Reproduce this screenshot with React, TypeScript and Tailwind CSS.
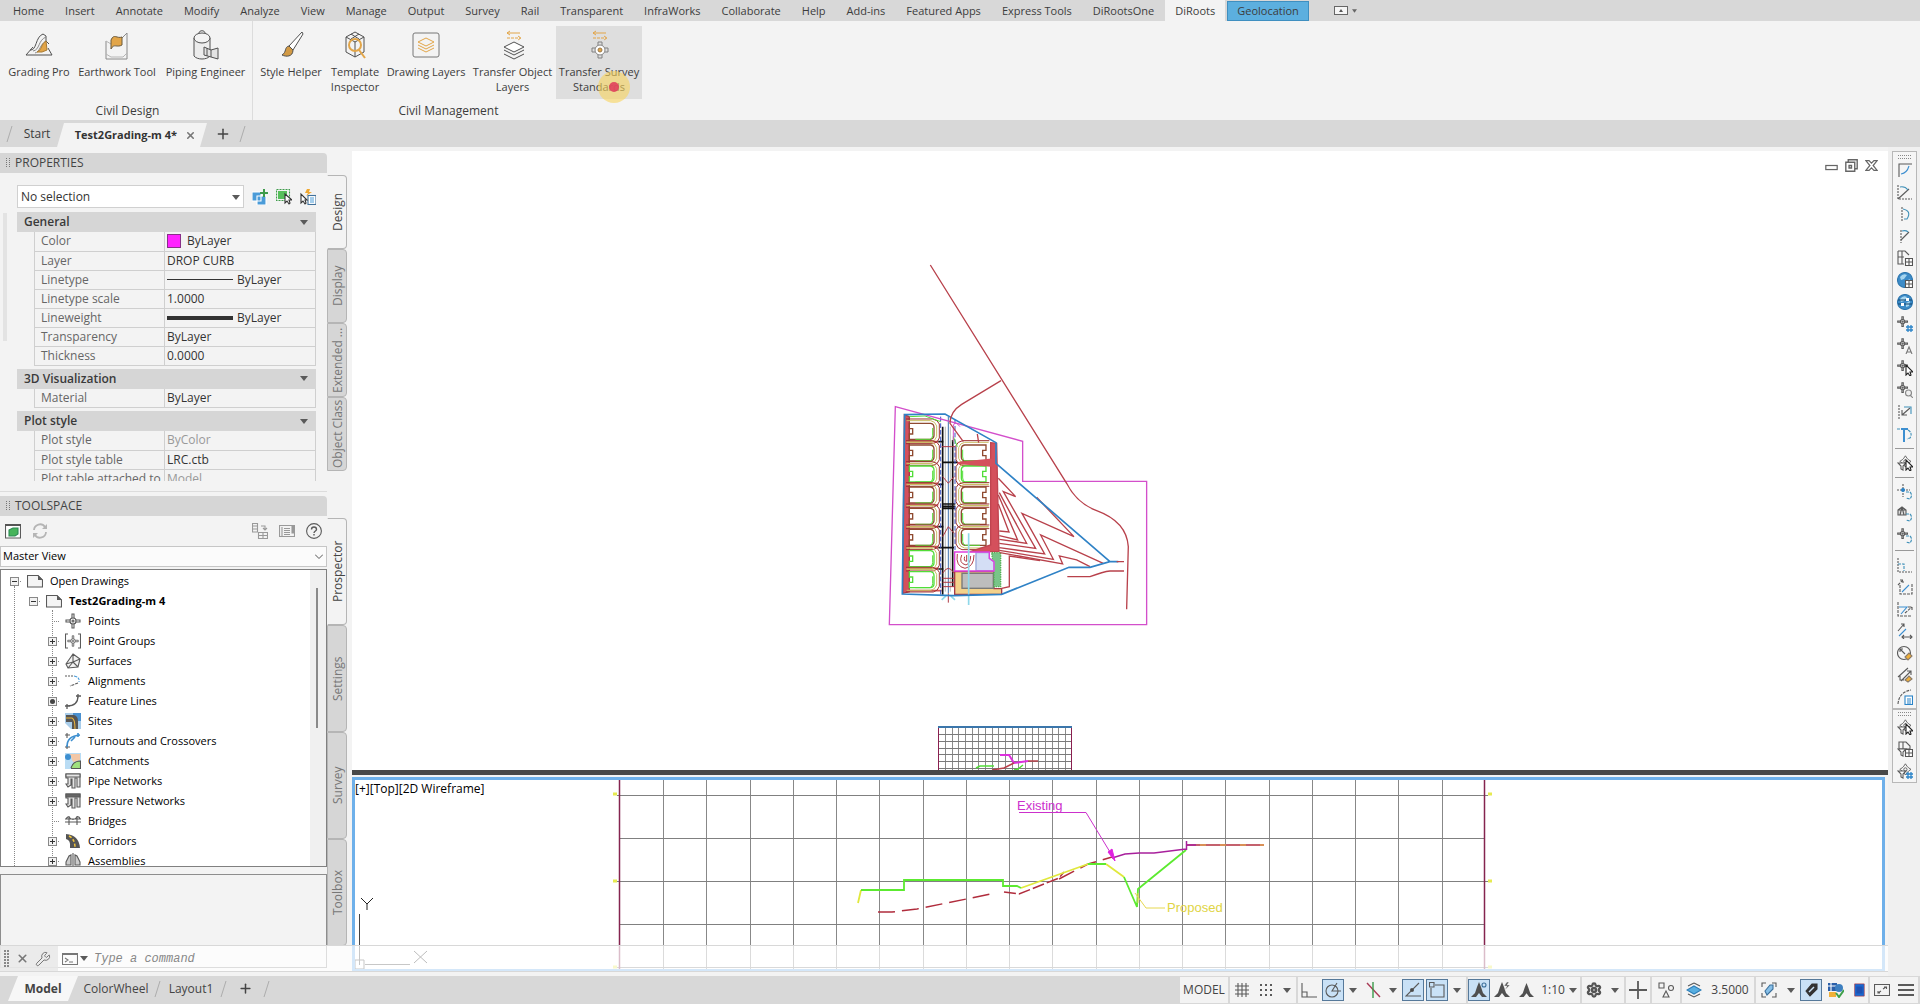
import React from "react";
import { Wrench, Settings, Plus, X } from "lucide-react";

type Kids = { children: React.ReactNode };

const Ico = ({ children, s = 16 }: Kids & { s?: number }) => (
  <svg viewBox="0 0 16 16" width={s} height={s} fill="none" stroke="#5a5a5a" strokeWidth="1.1" aria-hidden="true" className="shrink-0">
    {children}
  </svg>
);

const Caret = () => (
  <svg viewBox="0 0 8 5" width="8" height="5" aria-hidden="true" className="shrink-0">
    <path d="M0 0H8L4 5Z" fill="#5a5a5a" />
  </svg>
);

/* ---------- Menu bar ---------- */

const menus = [
  "Home", "Insert", "Annotate", "Modify", "Analyze", "View", "Manage", "Output", "Survey", "Rail",
  "Transparent", "InfraWorks", "Collaborate", "Help", "Add-ins", "Featured Apps", "Express Tools", "DiRootsOne",
];

const MenuBar = () => (
  <nav className="flex h-[21px] shrink-0 items-stretch gap-px bg-[#d8d8d8] pl-[3px] text-[11px] whitespace-nowrap">
    {menus.map((m) => (
      <button key={m} className="px-[10px] pt-0.5">{m}</button>
    ))}
    <button className="mr-px bg-[#f3f3f3] px-[10px] pt-0.5">DiRoots</button>
    <button className="mt-px border border-[#3f8fc0] bg-[#5cafdf] px-[9px]">Geolocation</button>
    <button aria-label="Minimize ribbon" className="ml-6 flex items-center gap-1">
      <svg viewBox="0 0 14 9" width="14" height="9"><rect x=".5" y=".5" width="13" height="8" fill="#f5f5f5" stroke="#666" /><path d="M5 6h4L7 3Z" fill="#555" /></svg>
      <svg viewBox="0 0 6 4" width="5" height="4"><path d="M0 0H6L3 4Z" fill="#666" /></svg>
    </button>
  </nav>
);

/* ---------- Ribbon ---------- */

const R = ({ children }: Kids) => (
  <svg viewBox="0 0 32 32" width="32" height="32" fill="none" stroke="#505050" strokeWidth="1" strokeLinejoin="round" aria-hidden="true">
    {children}
  </svg>
);

const arrows = (
  <g stroke="#e2a548">
    <path d="M10 3H23M13 1L10 3L13 5" />
    <path d="M10 8H24M21 6L24 8L21 10" strokeDasharray="3 1" />
  </g>
);

const icons = {
  grading: (
    <R>
      <path d="M3 25H29L25 18M3 25L10 17" />
      <path d="M7 20C14 21 12 7 20 4L23 6V11L26 14" />
      <path d="M10 21C17 20 15 10 23 7M12 23C17 22 17 14 23 11" stroke="#888" />
      <path d="M14 22C19 20 18 14 23 11L24 20L19 22Z" fill="#e2a548" stroke="#a97a30" />
    </R>
  ),
  earth: (
    <R>
      <path d="M5 11V29H26V3L21 8" stroke="#8a8a8a" />
      <path d="M5 11L10 14M5 24L10 27H22L26 23" stroke="#b5b5b5" />
      <path d="M10 19V10C13 3 16 9 21 7V15C16 18 13 13 10 19Z" fill="#e2a548" stroke="#6b5a3c" />
    </R>
  ),
  pipe: (
    <R>
      <path d="M4 8V26C7 30 17 30 20 26V8Z" fill="#ececec" />
      <ellipse cx="12" cy="8" rx="8" ry="5" fill="#f3f3f3" /><path d="M9 3C9 0 15 0 15 3" />
      <path d="M14 17L21 20L28 18V29L21 27L14 25ZM21 20V27M17 18V26" fill="#e3e3e3" />
    </R>
  ),
  brush: (
    <R>
      <path d="M27 2L14 16L18 20L28 4Z" fill="#fff" />
      <path d="M14 16C9 17 12 22 7 25C11 27 18 27 18 20Z" fill="#d29a45" />
    </R>
  ),
  template: (
    <R>
      <path d="M16 2L25 7V22L16 27L7 22V7ZM7 7L16 12L25 7M16 12V27M12 4L20 9M20 4L12 9" />
      <circle cx="16" cy="15" r="6" stroke="#e2a548" strokeWidth="2" /><path d="M20 20L26 28" stroke="#e2a548" strokeWidth="2" />
    </R>
  ),
  layers: (
    <R>
      <rect x="3" y="3" width="26" height="24" rx="2" stroke="#777" />
      <path d="M16 8L24 12L16 16L8 12ZM8 15L16 19L24 15M8 18L16 22L24 18" stroke="#e2a548" />
    </R>
  ),
  transfer: (
    <R>{arrows}<path d="M17 12L27 17L17 22L7 17Z" fill="#fff" /><path d="M7 20L17 25L27 20M7 24L17 29L27 24" /></R>
  ),
  survey: (
    <R>
      {arrows}
      <g stroke="#808080"><circle cx="17" cy="20" r="5" fill="#fff" /><path d="M15 15V12H19V15M15 25V28H19V25M12 18H9V22H12M22 18H25V22H22" /></g>
      <circle cx="17" cy="20" r="2" fill="#e2a548" stroke="#9a7a4a" />
    </R>
  ),
};

const Tool = ({ w, icon, label, active }: { w: string; icon: React.ReactNode; label: string; active?: boolean }) => (
  <button className={`${w} ${active ? "bg-[#dedede]" : ""} flex h-[73px] flex-col items-center pt-1`}>
    {icon}
    <span className="mt-0.5 text-center text-[11px] leading-[15px] whitespace-pre">{label}</span>
  </button>
);

const Ribbon = () => (
  <section aria-label="Ribbon" className="flex h-[99px] shrink-0 bg-[#f3f3f3]">
    <div className="flex flex-col items-center justify-between border-r border-[#dcdcdc] pt-[5px] pb-[2px] pl-[3px]">
      <div className="flex">
        <Tool w="w-[72px]" icon={icons.grading} label="Grading Pro" />
        <Tool w="w-[84px]" icon={icons.earth} label="Earthwork Tool" />
        <Tool w="w-[93px]" icon={icons.pipe} label="Piping Engineer" />
      </div>
      <span className="leading-[15px]">Civil Design</span>
    </div>
    <div className="flex flex-col items-center justify-between pt-[5px] pb-[2px] pl-[2px]">
      <div className="relative flex">
        <Tool w="w-[72px]" icon={icons.brush} label="Style Helper" />
        <Tool w="w-[56px]" icon={icons.template} label={"Template\nInspector"} />
        <Tool w="w-[86px]" icon={icons.layers} label="Drawing Layers" />
        <Tool w="w-[87px]" icon={icons.transfer} label={"Transfer Object\nLayers"} />
        <Tool w="w-[86px]" icon={icons.survey} label={"Transfer Survey\nStandards"} active />
        <span className="absolute right-3 -bottom-1 flex size-8 items-center justify-center rounded-full bg-[#f8d45c]/60">
          <span className="size-2.5 rounded-full bg-[#e0405c]/90" />
        </span>
      </div>
      <span className="leading-[15px]">Civil Management</span>
    </div>
  </section>
);

const Slash = () => (
  <svg viewBox="0 0 8 18" width="8" height="18" aria-hidden="true" className="shrink-0"><path d="M1 17L6 1" stroke="#adadad" fill="none" /></svg>
);

const DocTabs = () => (
  <div className="flex h-[27px] shrink-0 items-center bg-[#d8d8d8] pl-1.5">
    <Slash />
    <button className="w-[43px] shrink-0 pr-px pl-1 text-center">Start</button>
    <div className="mt-[3px] flex h-6 w-[150px] shrink-0 items-center justify-end gap-2 bg-[#f3f3f3] pr-[11px] [clip-path:polygon(7px_0,100%_0,calc(100%-7px)_100%,0_100%)]">
      <button className="text-[11px] font-bold whitespace-nowrap text-[#333]">Test2Grading-m 4*</button>
      <button aria-label="Close drawing"><X size={11} strokeWidth={3.5} color="#777" /></button>
    </div>
    <button aria-label="New drawing" className="ml-2"><Plus size={16} strokeWidth={2.2} color="#444" /></button>
    <span className="ml-2"><Slash /></span>
  </div>
);

/* ---------- Side panels ---------- */

const PanelTitle = ({ children }: Kids) => (
  <h2 className="flex h-5 shrink-0 items-center gap-[5px] rounded-tr bg-[#d6d6d6] pl-1.5 text-[#444]">
    <svg viewBox="0 0 4 10" width="4" height="10" fill="#777" aria-hidden="true">
      {[0, 2, 4, 6, 8].map((y) => <path key={y} d={`M0 ${y}h1v1h-1zM3 ${y}h1v1h-1z`} />)}
    </svg>
    {children}
  </h2>
);

const SideTabs = ({ names, h }: { names: string[]; h: string }) => (
  <div role="tablist" className="flex w-5 shrink-0 flex-col">
    {names.map((n, i) => (
      <button
        key={n}
        role="tab"
        aria-selected={i === 0}
        className={`${h} ${i === 0 ? "border-r-[#f3f3f3] bg-[#f3f3f3] text-[#444]" : "bg-[#d6d6d6] text-[#777]"} flex w-5 rotate-180 items-center justify-center rounded-l border border-[#b5b5b5] pr-0.5 [writing-mode:vertical-rl]`}
      >
        {n}
      </button>
    ))}
  </div>
);

const Head = ({ children }: Kids) => (
  <button className="flex h-5 w-full items-center justify-between bg-[#d6d6d6] pr-2 pl-[7px] font-semibold text-[#3a3a3a]">
    {children}
    <Caret />
  </button>
);

const PropTable = ({ rows }: { rows: [string, React.ReactNode, string?][] }) => (
  <table className="mb-[3px] ml-[17px] w-[282px] table-fixed border-collapse">
    <tbody>
      {rows.map(([k, v, c]) => (
        <tr key={k} className="h-[19px] border-b border-[#cfcfcf]">
          <th scope="row" className="h-[19px] w-[130px] overflow-hidden border-x border-[#cfcfcf] py-0 pl-1.5 text-left leading-[18px] font-normal whitespace-nowrap text-[#666]">{k}</th>
          <td className={`h-[19px] border-r border-[#cfcfcf] py-0 pl-[2px] leading-[18px] ${c ?? "text-[#333]"}`}>{v}</td>
        </tr>
      ))}
    </tbody>
  </table>
);

const Properties = () => (
  <div className="flex">
    <section aria-label="Properties" className="flex h-[339px] min-w-0 flex-1 flex-col border-b border-[#dcdcdc]">
      <PanelTitle>PROPERTIES</PanelTitle>
      <div className="flex min-h-0 flex-1">
        <div className="mt-10 ml-[3px] h-32 w-1 bg-[#e3e3e3]" />
        <div className="mr-[11px] mb-2.5 ml-[10px] flex-1 overflow-hidden pt-3">
          <div className="mb-1 flex items-center">
            <label className="relative">
              <select aria-label="Selection" className="h-[23px] w-[227px] appearance-none border border-[#d0d0d0] bg-white pl-[3px] text-[#333]">
                <option>No selection</option>
              </select>
              <span className="pointer-events-none absolute top-[10px] right-1"><Caret /></span>
            </label>
            <span className="ml-2 flex gap-2">
              <button aria-label="Toggle value of PICKADD"><Ico><path d="M0 3h9v9H0zM5 7h9v9H5z" fill="#4a9bd8" stroke="#fff" /><path d="M12 0v8M8 4h8" stroke="#3f9b4b" strokeWidth="2" /></Ico></button>
              <button aria-label="Select objects"><Ico><rect x="2" y="2" width="9" height="8" fill="#57bf5b" stroke="none" /><rect x=".5" y=".5" width="13" height="11" stroke="#3f9b4b" strokeDasharray="2 1" /><path d="M9 5V14L11 12L13 15L14 14L13 11H16Z" fill="#fff" stroke="#333" /></Ico></button>
              <button aria-label="Quick select"><Ico><path d="M7 0L5 4H8L6 7L12 3H9L10 0Z" fill="#f0a830" stroke="none" /><rect x="8" y="6.500" width="8" height="9" fill="#fff" stroke="#41719a" /><path d="M10 9h4M10 11h4M10 13h4" stroke="#4a9bd8" /><path d="M1 5V14L3 12L5 15L6 14L5 11H7Z" fill="#fff" stroke="#333" /></Ico></button>
            </span>
          </div>
          <Head>General</Head>
          <PropTable
            rows={[
              ["Color", <span className="flex items-center gap-1.5"><i className="size-3.5 border border-[#883088] bg-[#ff22ff]" />ByLayer</span>],
              ["Layer", "DROP CURB"],
              ["Linetype", <span className="flex items-center gap-1"><i className="h-px w-[66px] bg-[#333]" />ByLayer</span>],
              ["Linetype scale", "1.0000"],
              ["Lineweight", <span className="flex items-center gap-1"><i className="h-1 w-[66px] bg-[#333]" />ByLayer</span>],
              ["Transparency", "ByLayer"],
              ["Thickness", "0.0000"],
            ]}
          />
          <Head>3D Visualization</Head>
          <PropTable rows={[["Material", "ByLayer"]]} />
          <Head>Plot style</Head>
          <PropTable rows={[["Plot style", "ByColor", "text-[#999]"], ["Plot style table", "LRC.ctb"], ["Plot table attached to", "Model", "text-[#999]"]]} />
        </div>
      </div>
    </section>
    <div className="pt-[22px]">
      <SideTabs h="h-[74px]" names={["Design", "Display", "Extended ...", "Object Class"]} />
    </div>
  </div>
);

const cross = (
  <><path d="M8 1L10 4L12 6L15 8L12 10L10 12L8 15L6 12L4 10L1 8L4 6L6 4Z" /><circle cx="8" cy="8" r="2" /></>
);
const pointMark = (
  <><path d="M7 1H9V5L11 7H15V9H11L9 11V15H7V11L5 9H1V7H5L7 5Z" /><circle cx="8" cy="8" r="3" fill="#fff" /><circle cx="8" cy="8" r="1" /></>
);
const pageIcon = <Ico><path d="M.5 2.500H11L15.500 7V14H.5Z" fill="#f4f4f4" /><path d="M11 2V7H16Z" fill="#5a5a5a" stroke="none" /></Ico>;
const net = (dark: string) => (
  <Ico><path d="M1 1H15V14H12V5H10V15H7V6H6V12L3 14L1 11H3V5H1Z" fill="#e4e4e4" /><path d="M1 1H15V4H1Z" fill={dark} /></Ico>
);

const tree: [string, string, React.ReactNode][] = [
  ["Points", "", <Ico>{pointMark}</Ico>],
  ["Point Groups", "+", <Ico><path d="M3 1H.5V15H3M13 1H15.500V15H13" /><g transform="translate(2 2) scale(.75)">{pointMark}</g></Ico>],
  ["Surfaces", "+", <Ico><path d="M8 1L15 6L13 14L3 15L1 11ZM8 1V9M8 9L15 6M8 9L13 14M8 9L3 15M8 9L1 11" fill="#f2f2f2" /></Ico>],
  ["Alignments", "+", <Ico><path d="M0 3H8" strokeDasharray="2 1" /><path d="M9 3Q15 4 14 9" stroke="#4a9bd8" strokeDasharray="3 1" /><path d="M13 10L5 13" strokeDasharray="3 1" /></Ico>],
  ["Feature Lines", "o", <Ico><path d="M2 13Q13 13 13 3M0 13H5M2 11V16M11 3H16M13 1V5" strokeWidth="1.300" /></Ico>],
  ["Sites", "+", <Ico><path d="M0 0H16V16H6L0 10Z" fill="#a9cdea" stroke="none" /><path d="M8 0H16V8H8Z" fill="#4a90cf" stroke="none" /><path d="M1 2H9Q13 3 13 8V16H7V9H1Z" fill="#555" stroke="none" /><path d="M1 5H7Q10 6 10 16" stroke="#efb73a" /></Ico>],
  ["Turnouts and Crossovers", "+", <Ico><path d="M2 0V5M0 2H5M2 12V16M0 14H5" /><path d="M2 14C2 6 6 3 15 2M6 8L10 4M13 0V4" stroke="#3d8fd0" strokeWidth="1.600" /></Ico>],
  ["Catchments", "+", <Ico><path d="M0 0H16V16H0Z" fill="#b9dcf4" stroke="none" /><path d="M5 1H15V7L8 9Z" fill="#f3c7a6" stroke="none" /><path d="M6 15Q8 8 15.500 8V15.500H6" fill="#9fe07f" stroke="#555" /><circle cx="3" cy="4" r="3" fill="#3d8fd0" stroke="none" /></Ico>],
  ["Pipe Networks", "+", net("#e4e4e4")],
  ["Pressure Networks", "+", net("#666")],
  ["Bridges", "", <Ico><path d="M0 6H16M0 9H16M4 3V12M12 3V12M1 6Q3 3 4 4Q8 9 12 4Q14 3 15 6" /></Ico>],
  ["Corridors", "+", <Ico><path d="M1 1Q14 2 15 15H5Q6 7 1 6Z" fill="#555" stroke="none" /><path d="M4 3Q10 6 10 15" stroke="#efc23a" strokeDasharray="3 2" strokeWidth="1.500" /></Ico>],
  ["Assemblies", "+", <Ico><path d="M1 9L4 3L6 2V12H1ZM15 9L12 3L10 2V12H15ZM8 0V16" fill="#ccc" /></Ico>],
];

const Box = ({ kind }: { kind: string }) => (
  <svg viewBox="0 0 12 9" width="12" height="9" aria-hidden="true" className="shrink-0">
    {kind ? (
      <>
        <rect x=".5" y=".5" width="8" height="8" fill="#f2f2f2" stroke="#888" />
        {kind === "o" ? <circle cx="4.500" cy="4.500" r="2.500" fill="#444" /> : <path d={kind === "+" ? "M2 4.500H7M4.500 2V7" : "M2 4.500H7"} stroke="#333" />}
        <path d="M10 4.500H12" stroke="#888" strokeDasharray="1 1" />
      </>
    ) : (
      <path d="M4 4.500H12" stroke="#888" strokeDasharray="1 1" />
    )}
  </svg>
);

const TreeRow = ({ pad, kind, icon, label, bold }: { pad: string; kind: string; icon: React.ReactNode; label: string; bold?: boolean }) => (
  <li className={`${pad} flex h-5 items-center`}>
    <Box kind={kind} />
    <span className="ml-[5px]">{icon}</span>
    <button className={`ml-[7px] ${bold ? "font-bold" : ""}`}>{label}</button>
  </li>
);

const Toolspace = () => (
  <div className="mt-1 flex min-h-0 flex-1">
    <section aria-label="Toolspace" className="flex min-w-0 flex-1 flex-col">
      <PanelTitle>TOOLSPACE</PanelTitle>
      <div className="flex h-[30px] shrink-0 items-center gap-[11px] px-[5px]">
        <button aria-label="Toggle data"><Ico><path d="M.5 1.500H15.500V15H.5Z" fill="#fff" /><path d="M0 1H16V3H0Z" fill="#555" stroke="none" /><path d="M4 7L8 5H13V11L10 13H4Z" fill="#46b45a" stroke="#2d8a55" /></Ico></button>
        <button aria-label="Refresh"><Ico><path d="M2 7A6 6 0 0 1 13 4M14 9A6 6 0 0 1 3 12" stroke="#b5b5b5" strokeWidth="1.800" /><path d="M15 1V6H10ZM1 15V10H6Z" fill="#b5b5b5" stroke="none" /></Ico></button>
        <span className="flex-1" />
        <button aria-label="Item views"><Ico><g stroke="#999"><path d="M.5.500H5.500V9H.5ZM1 3H5M1 6H5M6.500 9.500H15.500V15.500H6.500ZM7 12.500H15M11 10V15M9 3H13V7M11 5L13 7L15 5" /></g></Ico></button>
        <button aria-label="Preview"><Ico><g stroke="#999"><path d="M.5 2.500H15.500V13.500H.5ZM3 4V13M5 5.500H11M5 7.500H11M5 9.500H11M5 11.500H11" /><path d="M13 3H15V10H13Z" fill="#999" /></g></Ico></button>
        <button aria-label="Help"><Ico><circle cx="8" cy="8" r="7.400" /><path d="M5.500 6.500Q5.500 4 8 4T10.500 6.500C10.500 8 8 8 8 10M8 11V12.500" strokeWidth="1.400" /></Ico></button>
      </div>
      <label className="relative shrink-0">
        <select aria-label="View" className="h-[21px] w-full appearance-none border border-[#c6c6c6] bg-[#fbfbfb] pl-[2px] text-[11px] text-black">
          <option>Master View</option>
        </select>
        <svg viewBox="0 0 8 5" width="8" height="5" className="pointer-events-none absolute top-2 right-1"><path d="M0 .5L4 4.500L8 .5" fill="none" stroke="#555" /></svg>
      </label>
      <div className="mt-[2px] flex h-[298px] shrink-0 overflow-hidden border border-[#808080] bg-white text-[11px] text-black">
        <ul className="relative flex-1 pt-px">
          <li className="absolute top-4 left-[13px] h-[282px] border-l border-dotted border-[#888]" aria-hidden="true" />
          <li className="absolute top-10 left-[51px] h-[260px] border-l border-dotted border-[#888]" aria-hidden="true" />
          <TreeRow pad="relative pl-[9px]" kind="-" icon={pageIcon} label="Open Drawings" />
          <TreeRow pad="relative pl-[28px]" kind="-" icon={pageIcon} label="Test2Grading-m 4" bold />
          {tree.map(([l, k, i]) => <TreeRow key={l} pad="relative pl-[47px]" kind={k} icon={i} label={l} />)}
        </ul>
        <div className="w-4 bg-[#f0f0f0] pt-[18px] pl-[6px]"><div className="h-[140px] w-0.5 bg-[#8a8a8a]" /></div>
      </div>
      <div className="mt-[7px] flex-1 border border-[#8d8d8d]" />
    </section>
    <div className="pt-[22px]">
      <SideTabs h="h-[107px]" names={["Prospector", "Settings", "Survey", "Toolbox"]} />
    </div>
  </div>
);

/* ---------- Drawing area ---------- */

const houseY = [520, 585, 648, 711, 775, 838, 902, 965];
const greenLeft = [2, 6, 7];
const House = ({ x, y, green, flip }: { x: number; y: number; green: boolean; flip?: boolean }) => (
  <g transform={flip ? `translate(${x + 76} ${y}) scale(-1 1)` : `translate(${x} ${y})`}>
    <path d="M-6-8H66Q80-6 84 8V40Q80 54 66 56H-6" stroke="#c9bd62" strokeWidth="3" />
    <path d="M-8-13H72Q88-10 92 2V44Q88 58 74 61H-8" stroke="#9c3030" strokeWidth="3" />
    <path d="M2 0H66Q76 2 76 12V36Q76 46 66 48H2V32H12V16H2Z" fill="#fff" stroke={green ? "#52dd38" : "#8f4a30"} strokeWidth="4" />
    <path d="M20 48H64Q72 46 72 36V14" stroke="#52dd38" strokeWidth="3" />
  </g>
);

const contours = [
  "M385 762L417 846L388 843",
  "M385 735L443 870L388 857",
  "M388 728L470 880L388 868",
  "M385 685L437 740L400 725L497 895L388 880",
  "M500 742L612 860L456 790L524 912L388 893",
  "M700 940L512 855L550 928L388 901",
  "M660 950L620 930L568 918L578 942L390 908",
  "M395 1015L418 1010V918L510 932",
];

const SitePlan = () => (
  <g transform="translate(870 250) scale(.3333)" fill="none" strokeWidth="4">
    <path d="M103 494L118 500V1025L98 1030Z" fill="#d4505c" stroke="#a83a48" />
    <path d="M118 575H205M118 700H205M118 765H205M118 830H205M118 890H205M118 955H205M110 1022H215" stroke="#cf5555" strokeWidth="5" />
    {houseY.map((y, i) => <House key={y} x={116} y={y} green={greenLeft.includes(i)} />)}
    {houseY.slice(1, 6).map((y, i) => <House key={y} x={274} y={y} green={i === 1} flip />)}
    <path d="M362 578L380 580L387 905H300L362 885Z" fill="#d4505c" stroke="#c04450" />
    <path d="M262 636L380 624V652L262 642Z" fill="#d4505c" stroke="none" />
    <path d="M218 530V1034M248 570V1010" stroke="#111" strokeWidth="5" />
    <path d="M235 500V1030" stroke="#3d6fae" strokeWidth="3" />
    <path d="M226 530V1025M241 530V1025" stroke="#999" strokeWidth="2" />
    <path d="M218 762H256M218 769H256M218 775H256M205 575H220M205 830H220M205 893H252M205 957H220M218 637H262M205 703H220" stroke="#111" strokeWidth="5" />
    <path d="M212 500V1034M255 508V900" stroke="#3b52c4" strokeWidth="3" strokeDasharray="14 6" />
    <path d="M218 680L235 700L252 680M218 860L235 830L252 850M215 590H255M218 970Q235 940 252 970M218 985H252M218 997H252M218 1010H252M235 1030V1058" stroke="#b03a44" strokeWidth="3" />
    <path d="M118 500L165 498L212 515M250 575V560L262 590" stroke="#52dd38" strokeWidth="3" />
    <path d="M250 575V530Q252 508 270 530" stroke="#d34fcb" strokeWidth="3" />
    <path d="M254 965H372V1016H395V1033H254Z" fill="#f3d28b" stroke="#a83a48" />
    <rect x="276" y="970" width="94" height="45" fill="#bdbdbd" stroke="#777" />
    <path d="M365 908H392V1010H372V965Z" fill="#79c489" stroke="#52b050" strokeDasharray="4 3" />
    <path d="M318 908H358V925L372 935V962H318Z" fill="#d4def5" stroke="#9aa8d8" />
    <path d="M254 906H358V925L372 935V963H254Z" stroke="#e03fe0" />
    <path d="M262 912Q256 950 285 955Q312 950 312 915M275 915Q265 940 288 945Q302 940 302 918M284 920Q280 934 290 934V915" stroke="#b03a44" strokeWidth="3" />
    <path d="M296 850V1065M215 1050L228 1038M255 1050L242 1038" stroke="#8fd8ea" strokeWidth="5" />
    <g stroke="#b8414b" strokeWidth="4">{contours.map((d) => <path key={d} d={d} />)}</g>
    <path d="M76 470L458 574V694H830V1124H58Z" stroke="#d34fcb" />
    <path d="M104 494L225 492L378 578V640L720 935L660 952H597L395 1033L250 1037L97 1032ZM720 935H745" stroke="#2f82c6" strokeWidth="5" />
    <g stroke="#b8414b">
      <path d="M181 45L590 700Q620 760 680 782Q770 815 775 890L770 1078" />
      <path d="M393 392L275 463Q240 485 240 520L280 575M322 552L326 578M592 980H660Q700 965 720 963H762M740 935H762" />
    </g>
  </g>
);

const range = (n: number) => Array.from({ length: n }, (_, i) => i);

const TopViewport = () => (
  <div className="relative h-[619px] overflow-hidden bg-white">
    <svg className="absolute inset-0 size-full" role="img" aria-label="Site plan">
      <g transform="translate(-352 -151)">
        <SitePlan />
        <g fill="none">
          <path d={range(19).map((i) => `M${945 + Math.round(i * 6.67)}.5 727V770`).join("")} stroke="#8c8c8c" />
          <path d={range(6).map((i) => `M938 ${734 + Math.round(i * 6.8)}.5H1072`).join("")} stroke="#7a7a7a" />
          <path d="M938.5 727V770M1071.500 727V770" stroke="#8a2050" />
          <path d="M938 727H1072" stroke="#3b76ab" strokeWidth="2" />
          <path d="M1000 755H1009L1014 763L1028 761" stroke="#dd30dd" strokeWidth="2" />
          <path d="M976 768L980 766H994M1014 770L1018 769L1023 765" stroke="#52dd38" strokeWidth="1.500" />
          <path d="M992 770L1004 768L1014 763M1028 761H1038" stroke="#b8414b" strokeWidth="1.500" />
        </g>
      </g>
    </svg>
    <div className="absolute top-2 right-2.5 flex gap-[7px]">
      <button aria-label="Minimize viewport"><Ico s={13}><rect x="1" y="8" width="14" height="5" fill="#fff" stroke="#666" strokeWidth="1.500" /></Ico></button>
      <button aria-label="Restore viewport"><Ico s={13}><path d="M4 4V1H15V12H12M1 4H12V15H1ZM5 8H8V11H5Z" stroke="#666" strokeWidth="1.700" /></Ico></button>
      <button aria-label="Close viewport"><Ico s={13}><path d="M1 2H5L8 5L11 2H15L10 8L15 14H11L8 11L5 14H1L6 8Z" stroke="#666" strokeWidth="1.500" /></Ico></button>
    </div>
  </div>
);

const BottomViewport = () => (
  <div className="relative mr-[3px] min-h-0 flex-1 overflow-hidden border-[3px] border-[#6eb0ea] bg-white">
    <span className="absolute top-px left-0 z-10 text-black">[+][Top][2D Wireframe]</span>
    <svg className="absolute -inset-[3px] h-[calc(100%+6px)] w-[calc(100%+6px)]" role="img" aria-label="Section profile">
      <g transform="translate(-352 -777)" fill="none">
        <path d={range(19).map((i) => `M${663 + Math.round(i * 43.25)}.5 774V972`).join("")} stroke="#888" />
        <path d="M617 795.500H1488M620 838.500H1485M617 881.500H1488M620 924.500H1485M617 967.500H1488" stroke="#808080" />
        <path d="M619.500 774V972M1484.500 774V972" stroke="#85244f" strokeWidth="1.500" />
        <path d="M613 794H617M613 881H617M613 967H617M1488 794H1492M1488 881H1492M1488 967H1492" stroke="#e6ea50" strokeWidth="3" />
        <path d="M878 912H892L917 909L996 893M1059 879L1088 864L1112 857" stroke="#b02c3c" strokeWidth="1.500" strokeDasharray="17 7" />
        <path d="M1004 892L1019 894L1059 878L1064 872" stroke="#b02c3c" strokeWidth="1.500" strokeDasharray="12 3" />
        <path d="M858 903L861 890M1021 888L1088 864M1106 864L1124 877" stroke="#e0e83c" strokeWidth="1.800" />
        <path d="M861 890H904V880H1003V886H1017L1021 888M1088 864H1106M1124 877L1137 907L1138 889L1186 850" stroke="#5cea30" strokeWidth="1.800" />
        <path d="M1186 845H1264" stroke="#b02c3c" strokeWidth="1.500" />
        <path d="M1200 845H1264" stroke="#e0a050" strokeWidth="1.500" strokeDasharray="6 14" />
        <path d="M1112 858L1125 854L1139 853H1154L1186 849M1186.500 841V850M1186 845H1196" stroke="#a8209c" strokeWidth="1.500" />
        <path d="M1019 812.500H1086L1113 857" stroke="#cc30cc" />
        <path d="M1108 852L1112 849L1115 861Z" fill="#e020e0" stroke="#e020e0" />
        <path d="M1135 893L1146 908H1165M1138 893V903" stroke="#e6d850" />
        <text x="1017" y="810" fill="#cc30cc" fontSize="13" className="font-[Liberation_Sans]">Existing</text>
        <text x="1167" y="912" fill="#e0d444" fontSize="13" className="font-[Liberation_Sans]">Proposed</text>
        <path d="M359.500 914V965M365 964.500H410M355 960H364V969H355Z" stroke="#444" />
        <path d="M361 898L367 904L373 898M367 904V910M414 951L427 963M427 951L414 963" stroke="#222" />
      </g>
    </svg>
  </div>
);

const CommandLine = () => (
  <form className="absolute right-8 bottom-8 left-0 z-20 flex h-[27px] items-center border-y border-[#d8d8d8] bg-white/70" onSubmit={(e) => e.preventDefault()}>
    <div className="flex h-full w-[58px] items-center gap-1.5 bg-[#e6e6e6]/80 pl-1">
      <svg viewBox="0 0 6 18" width="6" height="18" fill="#888" aria-hidden="true">{range(6).map((i) => <path key={i} d={`M0 ${i * 3}h2v2h-2zM3 ${i * 3}h2v2h-2z`} />)}</svg>
      <button type="button" aria-label="Close command line"><X size={13} strokeWidth={3} color="#777" /></button>
      <button type="button" aria-label="Customize"><Wrench size={16} strokeWidth={1.500} color="#777" /></button>
    </div>
    <button type="button" aria-label="Recent commands" className="ml-1 flex items-center gap-0.5">
      <Ico><path d="M.5 2.500H15.500V13.500H.5ZM.5 3.500H15M3 7L6 9L3 11M7 11H11" stroke="#777" /></Ico>
      <Caret />
    </button>
    <input aria-label="Command" placeholder="Type a command" className="ml-1.5 flex-1 bg-transparent font-['Liberation_Mono',monospace] text-xs text-[#333] italic outline-none placeholder:text-[#888]" />
  </form>
);

/* ---------- Right toolbar ---------- */

const miniCross = (extra: React.ReactNode) => (
  <Ico><g transform="scale(.7)" strokeWidth="1.500">{pointMark}</g>{extra}</Ico>
);
const cursor = <path d="M9 5V15L11 13L13 16L14 15L13 12H16Z" fill="#fff" stroke="#222" />;
const gridMark = <path d="M8.500 8.500H15.500V15.500H8.500ZM12 8V16M8 12H16" fill="#fff" stroke="#555" />;
const hash = <path d="M11 9V16M14 9V16M9 11H16M9 14H16" stroke="#2b84c8" strokeWidth="1.300" />;
const blueArc = <path d="M9 8H13Q16 11 13 15L9 14" stroke="#3f90b8" strokeDasharray="3 1" />;
const filter = <path d="M1 8H9L6 11V15L4 14V11Z" fill="#fff" />;
const globe = <><circle cx="8" cy="8" r="7.500" fill="#3d8cc8" stroke="#2d76ae" /><path d="M3 5Q6 1 10 3L7 7L4 8ZM9 9L13 7L12 12L9 13Z" fill="#a6d5ef" stroke="none" /></>;

const rightTools: (readonly [string, React.ReactNode] | null)[] = [
  ["Angle distance", <Ico><path d="M2 15V2H15" /><path d="M4 12Q10 11 12 4" stroke="#3d8fd0" /></Ico>],
  ["Bearing distance", <Ico><path d="M1 1V15H15" strokeDasharray="2 1" /><path d="M1 15L12 5" /><path d="M3 3Q8 2 11 6" stroke="#3f90b8" /></Ico>],
  ["Azimuth distance", <Ico><path d="M5 1V15" strokeDasharray="2 1" /><path d="M6 3Q15 5 10 13H7" stroke="#3f90b8" /></Ico>],
  ["Deflection distance", <Ico><path d="M4 2V15" strokeDasharray="2 1" /><path d="M4 12L12 4" /><path d="M5 3Q9 2 11 4" stroke="#3f90b8" /></Ico>],
  ["Northing easting", <Ico><path d="M1 1H8L12 5M1 1V14H7M5 1V14M1 7H7" />{gridMark}</Ico>],
  ["Grid northing easting", <Ico>{globe}{gridMark}</Ico>],
  ["Latitude longitude", <Ico>{globe}<path d="M1 6H15M1 10H15" stroke="#12456e" /><path d="M4 9H7V12H4ZM9 4H12V7H9Z" fill="#fff" stroke="none" /></Ico>],
  ["Point number", miniCross(hash)],
  ["Point name", miniCross(<path d="M9 16L12 9L15 16M10 14H14" stroke="#777" />)],
  ["Point object", miniCross(cursor)],
  ["Zoom to point", miniCross(<><circle cx="11.500" cy="11" r="3" fill="#eee" stroke="#888" /><path d="M13 13L16 16" stroke="#888" /></>)],
  ["Side shot", <Ico><path d="M2 1V15" strokeDasharray="2 1" /><path d="M5 11L13 4M5 6V11H10" /><path d="M7 3H14V10" stroke="#3f90b8" /></Ico>],
  ["Station offset", <Ico><path d="M0 3H5M11 4Q16 7 13 12L10 13" stroke="#3f90b8" strokeDasharray="3 1" /><path d="M4 3H11M7 3V16" stroke="#3d8fd0" strokeWidth="2" /></Ico>],
  null,
  ["Point filter", <Ico><g transform="translate(2 0) scale(.8)">{cross}</g>{filter}{cursor}</Ico>],
  null,
  ["Profile station from plan", <Ico><path d="M0 6H13M6 0V13" strokeDasharray="2 1" /><circle cx="6" cy="6" r="2" fill="#2b84c8" stroke="none" />{blueArc}</Ico>],
  ["Profile station from surface", <Ico><path d="M1 4L5 1L9 4V9H1ZM1 4H9M5 1L3 9M5 1L7 9" fill="#ddd" />{blueArc}</Ico>],
  ["Profile station from COGO", miniCross(blueArc)],
  null,
  ["Profile grade station", <Ico><path d="M1 1V15H15" strokeDasharray="2 1" /><path d="M1 7H7V14" stroke="#3f90b8" strokeDasharray="3 1" /></Ico>],
  ["Profile grade elevation", <Ico><path d="M3 6V15H15V5M1 6L6 1M3 1H6V4" strokeDasharray="3 1" /><path d="M5 13L12 6" stroke="#3d8fd0" /></Ico>],
  ["Profile grade length", <Ico><path d="M1 1V15H15M8 12L15 6M11 6H15V9" strokeDasharray="3 1" /><path d="M2 6H10L4 13" stroke="#3d8fd0" /></Ico>],
  ["Match length", <Ico><path d="M1 8L7 1M4 1H7V4M5 14H15M13 12L15 14L13 16M7 12L5 14L7 16" /><path d="M2 13L9 6" stroke="#3d8fd0" /></Ico>],
  ["Match radius", <Ico><circle cx="7" cy="8" r="6.500" /><path d="M3 4L8 9M3 7V4H6" /><path d="M8 12L12 8L15 11L11 15Z" fill="#efb03a" stroke="#8a7a6a" /></Ico>],
  ["Match distance", <Ico><path d="M1 10L11 1M4 14L14 4M10 4H14V8M3 9V13H7" /><path d="M8 13L12 9L15 12L11 15Z" fill="#efb03a" stroke="#8a7a6a" /></Ico>],
  ["Curve calculator", <Ico><path d="M1 15Q2 3 14 1" strokeDasharray="3 1" /><rect x="8" y="7" width="7.500" height="8.500" fill="#fff" stroke="#2b84c8" /><path d="M10 10H14M10 12H14M10 14H14" stroke="#2b84c8" /></Ico>],
];
const lowerTools: [string, React.ReactNode][] = [
  ["Select point", <Ico><g transform="translate(2 0) scale(.8)">{cross}</g>{filter}{cursor}</Ico>],
  ["Select grid", <Ico><path d="M2 1H9L13 5V8H2ZM6 1V8" />{filter}{gridMark}</Ico>],
  ["Select number", <Ico><g transform="translate(2 0) scale(.8)">{cross}</g>{filter}{hash}</Ico>],
];

const Handle = () => (
  <svg viewBox="0 0 13 4" width="13" height="4" fill="#888" aria-hidden="true">
    {range(7).map((i) => <path key={i} d={`M${i * 2} 0h1v1h-1zM${i * 2} 3h1v1h-1z`} />)}
  </svg>
);

const RightBar = () => (
  <aside aria-label="Transparent commands" className="flex w-8 shrink-0 flex-col items-start bg-[#f0f0f0] pt-1 pl-1">
    <div className="flex w-[25px] flex-col items-center border border-[#b8b8b8] bg-[#f5f5f5] pt-[3px]">
      <Handle />
      {rightTools.map((t, i) =>
        t ? (
          <button key={t[0]} aria-label={t[0]} className="flex h-[22px] items-center">{t[1]}</button>
        ) : (
          <hr key={i} className="my-[3px] w-[19px] border-[#999]" />
        ),
      )}
    </div>
    <div className="flex w-[25px] flex-col items-center border border-[#b8b8b8] bg-[#f5f5f5] pt-0.5">
      <Handle />
      {lowerTools.map(([n, i]) => <button key={n} aria-label={n} className="flex h-[22px] items-center">{i}</button>)}
    </div>
  </aside>
);

/* ---------- Status bar ---------- */

const Group = ({ children }: Kids) => <div className="flex h-[26px] items-center bg-[#f3f3f3]">{children}</div>;
const Cell = ({ children, label, w = "w-6", on }: Kids & { label: string; w?: string; on?: boolean }) => (
  <button aria-label={label} className={`${w} ${on ? "border border-[#56799a] bg-[#c9e1f6]" : ""} flex h-[22px] shrink-0 items-center justify-center`}>{children}</button>
);
const Drop = ({ label }: { label: string }) => <Cell label={label} w="w-[18px]"><Caret /></Cell>;
const person = <path d="M8 0L10 5L12 11L16 15H11L8 11L5 15H0L4 11L6 5Z" fill="#505050" stroke="none" />;

const StatusBar = () => (
  <footer className="flex h-7 shrink-0 items-center bg-[#d8d8d8] text-[#444]">
    <div className="flex items-center self-start pl-2">
      <button className="h-[25px] w-[70px] bg-[#f7f7f7] font-bold [clip-path:polygon(10px_0,100%_0,calc(100%-10px)_100%,0_100%)]">Model</button>
      <button className="w-[76px]">ColorWheel</button>
      <Slash />
      <button className="w-[58px]">Layout1</button>
      <Slash />
      <button aria-label="New layout" className="px-2.5"><Plus size={15} strokeWidth={2.400} /></button>
      <Slash />
    </div>
    <div className="ml-auto flex items-center gap-0.5 pr-0.5">
      <Group><button className="w-12">MODEL</button></Group>
      <Group>
        <Cell label="Grid"><Ico><path d="M1 4H15M1 8H15M1 12H15M4 1V15M8 1V15M12 1V15" /></Ico></Cell>
        <Cell label="Snap"><Ico><path d="M2 3H14M2 8H14M2 13H14" strokeWidth="2" strokeDasharray="2 3" /></Ico></Cell>
        <Drop label="Snap settings" />
      </Group>
      <Group>
        <Cell label="Ortho" w="w-[22px]"><Ico><path d="M1 1V15H16M1 10H6V15" /></Ico></Cell>
        <span className="w-0.5" />
        <Cell label="Polar tracking" w="w-[22px]" on><Ico><circle cx="7" cy="9" r="6" /><path d="M12 1L7 9H16" /></Ico></Cell>
        <Drop label="Polar settings" />
        <Cell label="Isometric drafting" w="w-[22px]"><Ico><path d="M2 1L15 15" stroke="#a83a55" strokeWidth="1.400" /><path d="M8 0V16" stroke="#3a9a4a" strokeWidth="1.400" /></Ico></Cell>
        <Drop label="Isometric settings" />
        <Cell label="Snap tracking" w="w-[22px]" on><Ico><path d="M14 1L1 14H16" /><circle cx="7" cy="8" r="1.500" fill="#444" /></Ico></Cell>
        <span className="w-0.5" />
        <Cell label="Object snap" w="w-[22px]" on><Ico><path d="M6 3H15V15H2V6M.5.500H5V5H.5Z" /></Ico></Cell>
        <Drop label="Object snap settings" />
      </Group>
      <Group>
        <Cell label="Annotation visibility" w="w-[22px]" on><Ico>{person}<circle cx="13" cy="3" r="2" stroke="#3b6f9a" /></Ico></Cell>
        <Cell label="Auto scale"><Ico>{person}<path d="M13 0L10 4H13L11 8L16 3H13L15 0Z" fill="#505050" stroke="#f3f3f3" strokeWidth=".5" /></Ico></Cell>
        <Cell label="Annotation scale"><Ico s={15}>{person}</Ico></Cell>
        <button className="flex w-[42px] items-center justify-center gap-1">1:10<Caret /></button>
      </Group>
      <Group>
        <Cell label="Workspace"><Settings size={16} strokeWidth={3.500} color="#555" /></Cell>
        <Drop label="Workspace settings" />
      </Group>
      <Group><Cell label="Annotation monitor"><Ico s={18}><path d="M8 0V16M0 8H16" strokeWidth="1.600" /></Ico></Cell></Group>
      <Group><Cell label="Isolate objects" w="w-[28px]"><Ico><path d="M1 1H6V6H1ZM8 9L5 15H11Z" /><circle cx="13" cy="6" r="2.500" /></Ico></Cell></Group>
      <Group>
        <Cell label="Elevation"><Ico><path d="M8 1L14 4M8 1L2 4M2 12L8 15L14 12" /><path d="M8 4L15 8L8 12L1 8Z" fill="#58aee0" stroke="#2b7db8" /></Ico></Cell>
        <button className="w-12">3.5000</button>
      </Group>
      <Group>
        <Cell label="Survey" w="w-[26px]"><Ico><path d="M1 5V1H5M11 1H15V5M15 11V15H11M5 15H1V11" /><path d="M4 9L9 3H12V7L6 13Z" fill="#86bfe8" stroke="#3b6f9a" /></Ico></Cell>
        <Drop label="Survey settings" />
        <Cell label="Label tag" w="w-[22px]" on><Ico><path d="M3 9L9 2H14V7L7 14Z" fill="#333" stroke="#333" /><path d="M6 10L11 5" stroke="#c9e1f6" strokeWidth="1.500" /></Ico></Cell>
        <Cell label="Geographic" w="w-[28px]"><Ico><path d="M0 1H9V9H0Z" fill="#2b5fa8" stroke="none" /><path d="M3 0V9M0 4H9" stroke="#fff" /><path d="M1 10H8V15H1Z" fill="#efb03a" stroke="none" /><circle cx="11" cy="6" r="4" fill="#3d7fc0" stroke="none" /><path d="M8 11L11 15L16 8" stroke="#3fa04a" strokeWidth="2" /></Ico></Cell>
        <Cell label="Hardware status" w="w-[18px]"><Ico s={14}><path d="M3 1H14V15H3Z" fill="#1769d2" stroke="#b33" strokeWidth=".7" /><path d="M5 4H12V12H5Z" fill="#1f50b0" stroke="none" /></Ico></Cell>
      </Group>
      <Group>
        <Cell label="Clean screen"><Ico><path d="M.5 2.500H15.500V13.500H.5ZM9 7L12 5M10 5H12.500V7M7 9L4 11M4 9V11H6" /></Ico></Cell>
        <Cell label="Customization"><Ico><path d="M0 3H16M0 8H16M0 13H16" strokeWidth="1.800" /></Ico></Cell>
      </Group>
    </div>
  </footer>
);

export default function App() {
  return (
    <div className="relative flex h-screen flex-col overflow-hidden bg-[#f3f3f3] font-['Open_Sans','Noto_Sans',sans-serif] text-xs text-[#3c3c3c]">
      <MenuBar />
      <Ribbon />
      <DocTabs />
      <div className="flex min-h-0 flex-1">
        <div className="flex w-[347px] shrink-0 flex-col pt-[6px] pb-2">
          <Properties />
          <Toolspace />
        </div>
        <div className="w-[5px] shrink-0" />
        <main className="flex min-w-0 flex-1 flex-col border-t-4 border-[#f3f3f3] pb-1">
          <TopViewport />
          <div className="mb-0.5 h-[5px] shrink-0 bg-[#484848]" />
          <BottomViewport />
        </main>
        <RightBar />
      </div>
      <CommandLine />
      <StatusBar />
    </div>
  );
}
